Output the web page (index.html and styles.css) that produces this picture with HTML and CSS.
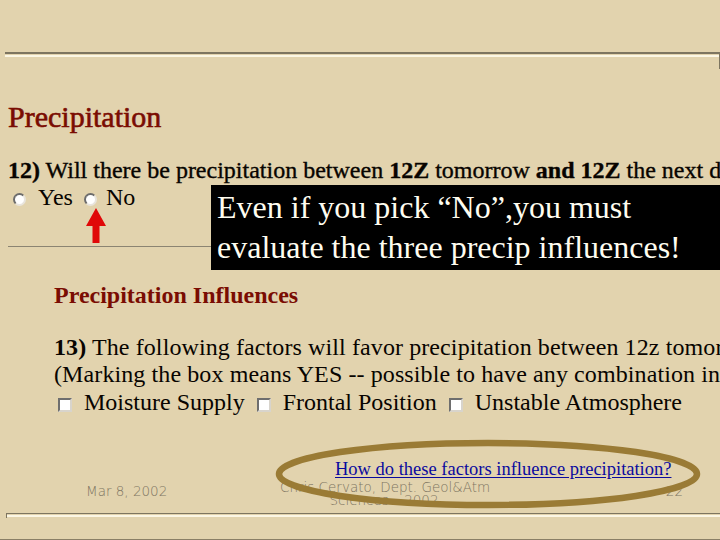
FILE: index.html
```html
<!DOCTYPE html>
<html>
<head>
<meta charset="utf-8">
<link rel="stylesheet" href="styles.css">
</head>
<body>
<div class="page">
  <div class="top-rule"></div>
  <h1 class="title">Precipitation</h1>
  <p class="q q12"><b>12)</b> Will there be precipitation between <b>12Z</b> tomorrow <b>and 12Z</b> the next day?</p>
  <div class="radios">
    <span class="radio"></span><span class="opt-yes">Yes</span>
    <span class="radio radio-no"></span><span>No</span>
  </div>
  <div class="thin-rule"></div>

  <h2 class="subtitle">Precipitation Influences</h2>
  <p class="q q13"><b>13)</b> The following factors will favor precipitation between 12z tomorrow and 12z the next day?</p>
  <p class="q q13">(Marking the box means YES -- possible to have any combination including none)</p>
  <div class="checks">
    <span class="check"></span><span class="check-label">Moisture Supply</span>
    <span class="check"></span><span class="check-label">Frontal Position</span>
    <span class="check"></span><span class="check-label">Unstable Atmosphere</span>
  </div>

  <div class="link-row"><a class="help-link" href="#">How do these factors influence precipitation?</a></div>

  <footer class="footer">
    <div class="date">Mar 8, 2002</div>
    <div class="author">Chris Cervato, Dept. Geol&amp;Atm<br>Sciences – 2002</div>
    <div class="pageno">22</div>
  </footer>
  <div class="bottom-rule"></div>

  <div class="callout">Even if you pick “No”,you must<br>evaluate the three precip influences!</div>

  <svg class="arrow" width="20" height="35" viewBox="0 0 20 35">
    <polygon points="10,0 20,18 13.5,18 13.5,35 6.5,35 6.5,18 0,18" fill="#e00808"/>
  </svg>

  <svg class="ellipse" width="720" height="540" viewBox="0 0 720 540">
    <ellipse cx="488" cy="474" rx="209" ry="31" fill="none" stroke="#9a7b35" stroke-width="6.5"/>
  </svg>
</div>
</body>
</html>
```

FILE: styles.css
```css
html, body {
  margin: 0;
  padding: 0;
}
body {
  background: #e2d3ae;
  width: 720px;
  height: 540px;
  overflow: hidden;
  font-family: "Liberation Serif", "Times New Roman", serif;
  color: #080400;
}
.page {
  position: relative;
  width: 720px;
  height: 540px;
  box-sizing: border-box;
  border-bottom: 1px solid #8a7f66;
  overflow: hidden;
  white-space: nowrap;
}
.top-rule {
  margin: 52px 0 0 5px;
  height: 17px;
  border-right: 1px solid #7d7560;
  background: linear-gradient(to bottom, #7d7560 0 2px, transparent 2px 3px, #fbf6e4 3px 5px, transparent 5px);
}
.title {
  margin: 31px 0 0 8px;
  font-size: 30px;
  line-height: 34px;
  font-weight: normal;
  color: #7a0c02;
  -webkit-text-stroke: 0.6px #7a0c02;
}
.q {
  margin: 0;
  font-size: 24px;
  line-height: 27px;
}
.q12 {
  margin: 23px 0 0 8px;
  -webkit-text-stroke: 0.35px #080400;
}
.radios {
  display: flex;
  align-items: center;
  height: 27px;
  padding-left: 13px;
  font-size: 24px;
  line-height: 27px;
}
.radio {
  width: 13px;
  height: 13px;
  box-sizing: border-box;
  border-radius: 50%;
  background: #fff;
  border: 2px solid #6c6c6c;
  border-right-color: #e8e4dc;
  border-bottom-color: #e8e4dc;
  margin-right: 12px;
  transform: translateY(2px);
}
.opt-yes {
  margin-right: 11px;
}
.radio-no {
  margin-right: 9px;
}
.thin-rule {
  margin: 35px 0 0 8px;
  height: 1px;
  background: #8b8472;
}
.subtitle {
  margin: 35px 0 0 54px;
  font-size: 24px;
  line-height: 27px;
  font-weight: bold;
  color: #7a0c02;
}
.q13 {
  padding-left: 54px;
  letter-spacing: 0.1px;
}
.subtitle + .q13 {
  margin-top: 25px;
}
.checks {
  display: flex;
  align-items: center;
  margin-top: 1px;
  padding-left: 58px;
  height: 27px;
  font-size: 24px;
  line-height: 27px;
}
.check {
  width: 14px;
  height: 14px;
  box-sizing: border-box;
  background: #fff;
  border: 2px solid #6e6e6e;
  border-right-color: #d8d4cc;
  border-bottom-color: #d8d4cc;
  margin-right: 12px;
  transform: translateY(2px);
}
.check-label {
  margin-right: 12px;
}
.link-row {
  margin-top: 42px;
  padding-left: 335px;
  height: 22px;
  line-height: 22px;
}
.help-link {
  font-size: 18.5px;
  color: #0a0a9e;
  text-decoration: underline;
  text-underline-offset: 2px;
}
.footer {
  display: grid;
  grid-template-columns: 194px 208px 1fr;
  margin-top: 1px;
  padding-left: 86px;
  height: 27px;
  font-family: "DejaVu Sans", "Liberation Sans", sans-serif;
  font-weight: 200;
  font-size: 13.5px;
  line-height: 13px;
  color: #7e7562;
}
.date {
  margin-top: 4px;
}
.author {
  text-align: center;
}
.pageno {
  margin-top: 4px;
  text-align: right;
  padding-right: 37px;
}
.bottom-rule {
  margin: 5px 0 0 6px;
  height: 4px;
  border-left: 1px solid #7d7560;
  border-top: 1px solid #7d7560;
  background: linear-gradient(to bottom, transparent 0 1px, #fbf6e4 1px 3px, transparent 3px);
}
.callout {
  position: absolute;
  left: 211px;
  top: 185px;
  right: 0;
  height: 85px;
  box-sizing: border-box;
  padding: 2px 0 0 6px;
  background: #000;
  color: #fffdf0;
  font-size: 32px;
  line-height: 40px;
}
.arrow {
  position: absolute;
  left: 86px;
  top: 208px;
}
.ellipse {
  position: absolute;
  left: 0;
  top: 0;
  pointer-events: none;
}
```
